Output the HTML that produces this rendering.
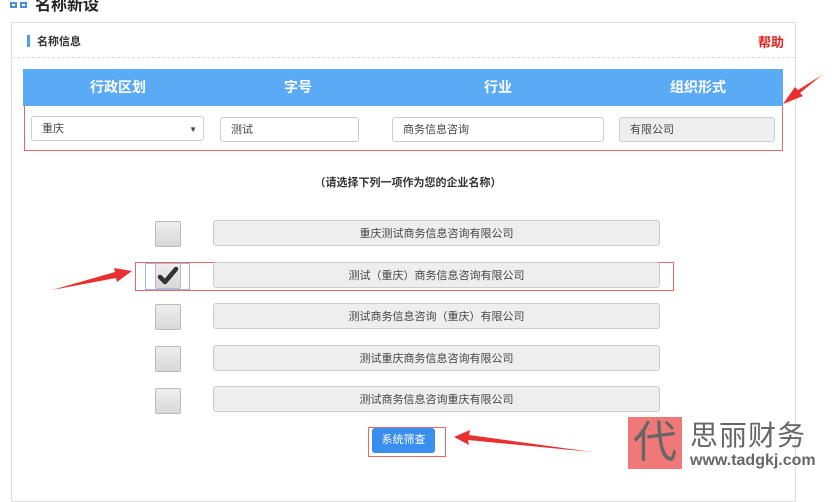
<!DOCTYPE html><html><head><meta charset="utf-8"><style>
*{margin:0;padding:0;box-sizing:border-box}
body{width:832px;height:486px;background:#fff;position:relative;overflow:hidden;font-family:"Liberation Sans","Noto Sans CJK SC",sans-serif;color:#333}
.a{position:absolute}
.inp{position:absolute;height:25px;border:1px solid #ccc;border-radius:3px;font-size:11px;padding-left:10px;line-height:25px;color:#444;background:#fff}
.cb{position:absolute;left:155px;width:26px;height:26px;background:linear-gradient(#eee,#d8d8d8);border:1px solid #bbb;border-radius:2px}
.bar{position:absolute;left:213px;width:447px;height:26px;background:#eee;border:1px solid #ccc;border-radius:3px;font-size:11px;text-align:center;line-height:26px;color:#444}
.h{position:absolute;top:69px;height:37px;line-height:37px;color:#fff;font-weight:bold;font-size:14px;text-align:center}
</style></head><body>
<div class="a" style="left:10px;top:-6px;width:18px;height:14px">
<div class="a" style="left:0;top:0;width:7px;height:6px;border:2px solid #4a8fd8"></div><div class="a" style="left:10px;top:0;width:7px;height:6px;border:2px solid #4a8fd8"></div>
<div class="a" style="left:0;top:8px;width:7px;height:6px;border:2px solid #4a8fd8"></div><div class="a" style="left:10px;top:8px;width:7px;height:6px;border:2px solid #4a8fd8"></div></div>
<div class="a" style="left:35px;top:-9px;font-size:16px;font-weight:bold;color:#222">名称新设</div>
<div class="a" style="left:11px;top:22px;width:785px;height:480px;border:1px solid #ddd"></div>
<div class="a" style="left:27px;top:35px;width:3px;height:12px;background:#4a9ff0"></div>
<div class="a" style="left:37px;top:33px;font-size:11px;font-weight:bold;color:#333">名称信息</div>
<div class="a" style="left:758px;top:32px;font-size:13px;font-weight:bold;color:#e02020">帮助</div>
<div class="a" style="left:12px;top:57px;width:783px;border-top:1px dashed #ddd"></div>
<div class="a" style="left:23px;top:69px;width:760px;height:37px;background:#5aaaf5"></div>
<div class="h" style="left:23px;width:190px">行政区划</div>
<div class="h" style="left:213px;width:170px">字号</div>
<div class="h" style="left:383px;width:230px">行业</div>
<div class="h" style="left:613px;width:170px">组织形式</div>
<div class="a" style="left:24px;top:106px;width:759px;height:45px;border:1px solid #e26a6a;border-top:none"></div>
<div class="inp" style="left:31px;top:116px;width:173px">重庆<span style="position:absolute;right:6px;font-size:8px">▼</span></div>
<div class="inp" style="left:220px;top:117px;width:139px">测试</div>
<div class="inp" style="left:392px;top:117px;width:212px">商务信息咨询</div>
<div class="inp" style="left:619px;top:117px;width:156px;background:#eee">有限公司</div>
<div class="a" style="left:0;width:816px;top:174px;text-align:center;font-size:11px;font-weight:bold;color:#333">（请选择下列一项作为您的企业名称）</div>
<div class="cb" style="top:221px"></div><div class="bar" style="top:220px">重庆测试商务信息咨询有限公司</div>
<div class="a" style="left:135px;top:262px;width:539px;height:29px;border:1px solid #e26a6a"></div>
<div class="a" style="left:145px;top:263px;width:45px;height:27px;border:1px solid #9ab8f0"></div>
<div class="cb" style="top:263px"></div>
<svg class="a" style="left:157px;top:266px" width="22" height="20"><path d="M3 11 L8 16 L19 3" stroke="#333" stroke-width="4.5" fill="none" stroke-linecap="round" stroke-linejoin="round"/></svg>
<div class="bar" style="top:262px">测试（重庆）商务信息咨询有限公司</div>
<div class="cb" style="top:304px"></div><div class="bar" style="top:303px">测试商务信息咨询（重庆）有限公司</div>
<div class="cb" style="top:346px"></div><div class="bar" style="top:345px">测试重庆商务信息咨询有限公司</div>
<div class="cb" style="top:388px"></div><div class="bar" style="top:386px">测试商务信息咨询重庆有限公司</div>
<div class="a" style="left:368px;top:427px;width:78px;height:30px;border:1px solid #e26a6a"></div>
<div class="a" style="left:372px;top:428px;width:63px;height:25px;background:#3a8ef0;border-radius:3px;color:#fff;font-size:11px;text-align:center;line-height:25px">系统筛查</div>
<svg class="a" style="left:0;top:0" width="832" height="486">
<polygon points="822,75 800,93 803,96 783,104 795,87 798,90" fill="#e83030"/>
<polygon points="52,290 115,272 114,268 132,271 117,282 116,278" fill="#e83030"/>
<polygon points="592,452 468,440 469,445 454,437 470,430 469,435" fill="#e83030"/>
</svg>
<div class="a" style="left:628px;top:417px;width:54px;height:52px;background:#f07878;color:#666;font-size:44px;line-height:52px;text-align:center">代</div>
<div class="a" style="left:690px;top:414px;font-size:28px;color:#666;letter-spacing:1px">思丽财务</div>
<div class="a" style="left:690px;top:452px;font-size:16px;font-weight:bold;color:#666">www.tadgkj.com</div>
</body></html>
